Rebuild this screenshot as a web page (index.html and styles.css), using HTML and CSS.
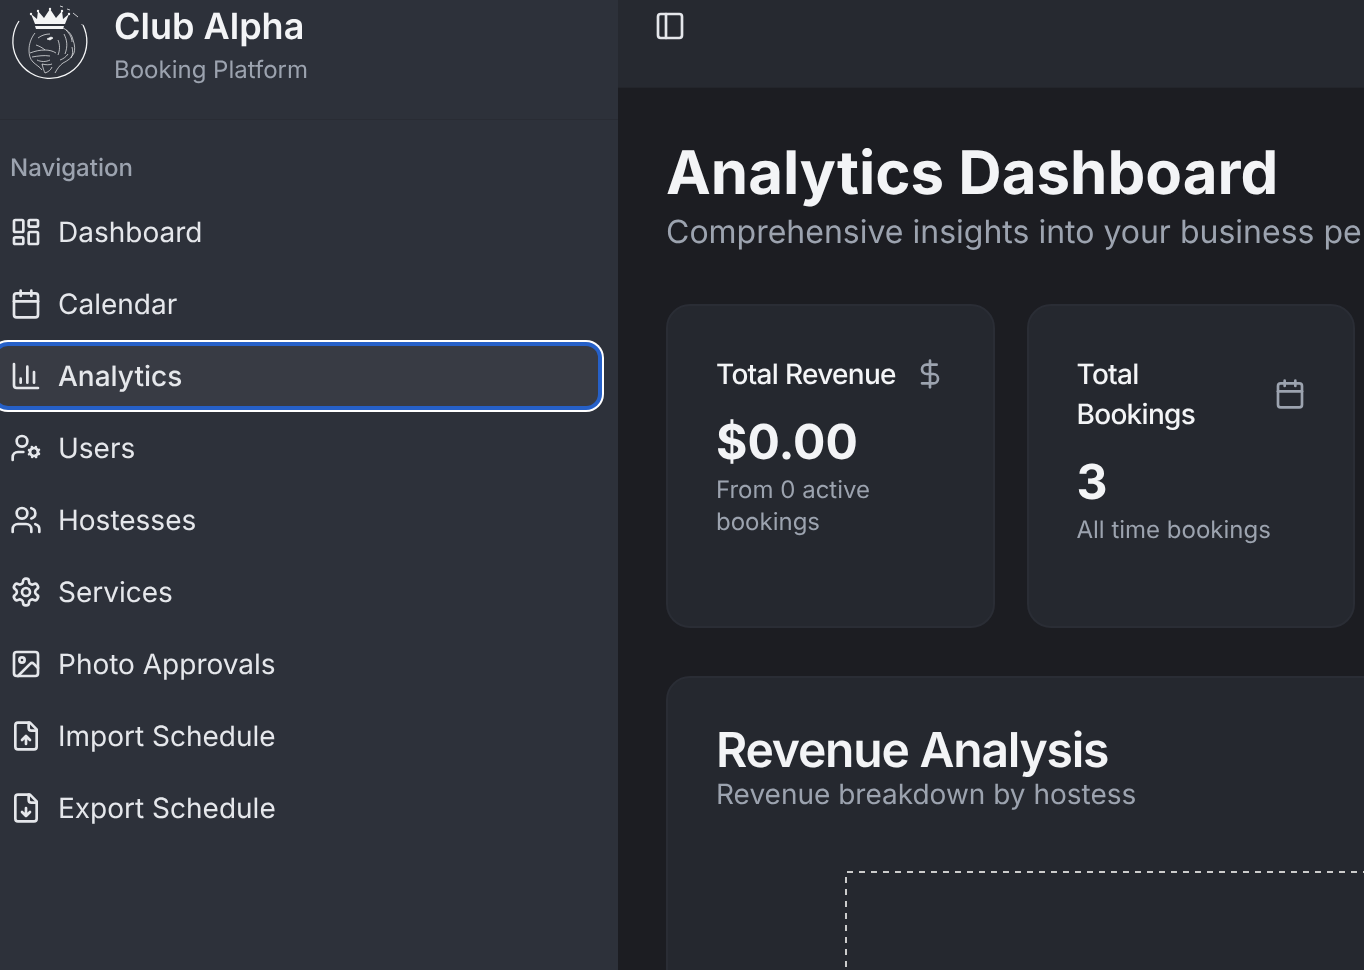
FILE: index.html
```html
<!DOCTYPE html>
<html>
<head>
<meta charset="utf-8">
<title>Club Alpha - Analytics</title>
<link rel="stylesheet" href="styles.css">
</head>
<body>
<div class="app">

<aside class="sidebar">
  <div class="brand">
    <svg class="logo" viewBox="0 0 100 90" fill="none" stroke="#f4f5f6">
      <!-- ring, open at the top where the crown sits -->
      <path d="M19 21A37 37 0 1 0 83 25" stroke-width="1.3"/>
      <path d="M60 6l3 1M67 9l3 1M73 13l5 4M82 24v1" stroke-width=".8"/>
      <!-- crown -->
      <path d="M35 24L31 14l6 5 1-8 6 7 6-9 6 9 6-7 1 8 6-5-4 10z" fill="#f4f5f6" stroke="none"/>
      <path d="M35 26h29l-1 3H36z" fill="#f4f5f6" stroke="none"/>
      <circle cx="31" cy="14" r="1.2" fill="#f4f5f6" stroke="none"/>
      <circle cx="38" cy="11" r="1.2" fill="#f4f5f6" stroke="none"/>
      <circle cx="50" cy="9" r="1.2" fill="#f4f5f6" stroke="none"/>
      <circle cx="62" cy="11" r="1.2" fill="#f4f5f6" stroke="none"/>
      <circle cx="69" cy="14" r="1.2" fill="#f4f5f6" stroke="none"/>
      <!-- lion head -->
      <g stroke-width=".7">
        <path d="M35 33C31 38 29 44 29 50c0 5 1 9 4 12 3 3 7 5 9 8"/>
        <path d="M63 28c6 3 9 7 10 12 2 5 2 10 1 13-2 5-7 8-11 10-3 2-6 6-8 10"/>
        <path d="M66 30c4 4 6 8 6 12M72 47c1 4 1 7-1 11M64 34c3 6 4 12 1 20M58 40c2 5 2 10 0 15M60 60c3-1 6-3 8-6"/>
        <path d="M38 38c4-3 8-4 12-4M36 45c3 1 7 3 9 5M30 53c5-2 10-3 15-3 4 0 8 1 11 3M32 57c6-1 12-2 18-1M37 60c4 2 9 2 13 0"/>
        <path d="M42 64c1 4 2 7 3 9 3-1 6-3 7-6M42 64c4 1 8 1 10 0"/>
        <path d="M47 39l4-2 2 1-3 2z" fill="#f4f5f6"/>
      </g>
    </svg>
    <div class="brand-text">
      <div class="brand-name">Club Alpha</div>
      <div class="brand-sub">Booking Platform</div>
    </div>
  </div>

  <div class="nav-label">Navigation</div>
  <nav class="nav">
    <a class="nav-item">
      <svg class="icon" viewBox="0 0 24 24"><rect x="3" y="3" width="7" height="9" rx="1"/><rect x="14" y="3" width="7" height="5" rx="1"/><rect x="14" y="12" width="7" height="9" rx="1"/><rect x="3" y="16" width="7" height="5" rx="1"/></svg>
      Dashboard
    </a>
    <a class="nav-item">
      <svg class="icon" viewBox="0 0 24 24"><path d="M8 2v4M16 2v4"/><rect x="3" y="4" width="18" height="18" rx="2"/><path d="M3 10h18"/></svg>
      Calendar
    </a>
    <a class="nav-item active">
      <svg class="icon" viewBox="0 0 24 24"><path d="M3 3v16a2 2 0 0 0 2 2h16"/><path d="M8 17v-3M13 17V5M18 17V9"/></svg>
      Analytics
    </a>
    <a class="nav-item">
      <svg class="icon" viewBox="0 0 24 24"><circle cx="18" cy="15" r="3"/><circle cx="9" cy="7" r="4"/><path d="M10 15H6a4 4 0 0 0-4 4v2"/><path d="M21.7 16.4l-.9-.3M15.2 13.9l-.9-.3M16.6 18.7l.3-.9M19.1 12.2l.3-.9M19.6 18.7l-.4-1M16.8 12.3l-.4-1M14.3 16.6l1-.4M20.7 13.8l1-.4"/></svg>
      Users
    </a>
    <a class="nav-item">
      <svg class="icon" viewBox="0 0 24 24"><path d="M16 21v-2a4 4 0 0 0-4-4H6a4 4 0 0 0-4 4v2"/><circle cx="9" cy="7" r="4"/><path d="M22 21v-2a4 4 0 0 0-3-3.87"/><path d="M16 3.13a4 4 0 0 1 0 7.75"/></svg>
      Hostesses
    </a>
    <a class="nav-item">
      <svg class="icon" viewBox="0 0 24 24"><path d="M12.22 2h-.44a2 2 0 0 0-2 2v.18a2 2 0 0 1-1 1.73l-.43.25a2 2 0 0 1-2 0l-.15-.08a2 2 0 0 0-2.73.73l-.22.38a2 2 0 0 0 .73 2.73l.15.1a2 2 0 0 1 1 1.72v.51a2 2 0 0 1-1 1.74l-.15.09a2 2 0 0 0-.73 2.73l.22.38a2 2 0 0 0 2.73.73l.15-.08a2 2 0 0 1 2 0l.43.25a2 2 0 0 1 1 1.73V20a2 2 0 0 0 2 2h.44a2 2 0 0 0 2-2v-.18a2 2 0 0 1 1-1.73l.43-.25a2 2 0 0 1 2 0l.15.08a2 2 0 0 0 2.73-.73l.22-.39a2 2 0 0 0-.73-2.73l-.15-.08a2 2 0 0 1-1-1.74v-.5a2 2 0 0 1 1-1.74l.15-.09a2 2 0 0 0 .73-2.73l-.22-.38a2 2 0 0 0-2.73-.73l-.15.08a2 2 0 0 1-2 0l-.43-.25a2 2 0 0 1-1-1.73V4a2 2 0 0 0-2-2z"/><circle cx="12" cy="12" r="3"/></svg>
      Services
    </a>
    <a class="nav-item">
      <svg class="icon" viewBox="0 0 24 24"><rect x="3" y="3" width="18" height="18" rx="2"/><circle cx="9" cy="9" r="2"/><path d="M21 15l-3.09-3.09a2 2 0 0 0-2.82 0L6 21"/></svg>
      Photo Approvals
    </a>
    <a class="nav-item">
      <svg class="icon" viewBox="0 0 24 24"><path d="M15 2H6a2 2 0 0 0-2 2v16a2 2 0 0 0 2 2h12a2 2 0 0 0 2-2V7z"/><path d="M14 2v4a2 2 0 0 0 2 2h4"/><path d="M12 18v-6M9 15l3-3 3 3"/></svg>
      Import Schedule
    </a>
    <a class="nav-item">
      <svg class="icon" viewBox="0 0 24 24"><path d="M15 2H6a2 2 0 0 0-2 2v16a2 2 0 0 0 2 2h12a2 2 0 0 0 2-2V7z"/><path d="M14 2v4a2 2 0 0 0 2 2h4"/><path d="M12 12v6M9 15l3 3 3-3"/></svg>
      Export Schedule
    </a>
  </nav>
</aside>

<div class="main">
  <header class="topbar">
    <svg class="icon toggle" viewBox="0 0 24 24"><rect x="3" y="3" width="18" height="18" rx="2"/><path d="M9 3v18"/></svg>
  </header>

  <div class="content">
    <h1 class="title">Analytics Dashboard</h1>
    <p class="subtitle">Comprehensive insights into your business performance</p>

    <div class="stats">
      <div class="card">
        <div class="card-head">
          <div class="card-title">Total Revenue</div>
          <svg class="icon muted" viewBox="0 0 24 24"><path d="M12 2v20"/><path d="M17 5H9.5a3.5 3.5 0 0 0 0 7h5a3.5 3.5 0 0 1 0 7H6"/></svg>
        </div>
        <div class="card-value">$0.00</div>
        <div class="card-note">From 0 active bookings</div>
      </div>
      <div class="card">
        <div class="card-head">
          <div class="card-title">Total Bookings</div>
          <svg class="icon muted" viewBox="0 0 24 24"><path d="M8 2v4M16 2v4"/><rect x="3" y="4" width="18" height="18" rx="2"/><path d="M3 10h18"/></svg>
        </div>
        <div class="card-value">3</div>
        <div class="card-note">All time bookings</div>
      </div>
    </div>

    <section class="panel">
      <h2 class="panel-title">Revenue Analysis</h2>
      <p class="panel-sub">Revenue breakdown by hostess</p>
      <svg class="chart" viewBox="0 0 700 300"><path d="M2 300V1H700"/></svg>
    </section>
  </div>
</div>

</div>
</body>
</html>
```

FILE: styles.css
```css
html, body {
  margin: 0;
  padding: 0;
  height: 100%;
  overflow: hidden;
}
body {
  background: #1c1d22;
  color: #f3f4f6;
  font-family: Inter, "Liberation Sans", sans-serif;
  text-rendering: geometricPrecision;
}
.app {
  display: flex;
  height: 970px;
  overflow: hidden;
  will-change: transform; /* own layer, gives the softer grey text edges */
}

/* sidebar */
.sidebar {
  width: 618px;
  flex: none;
  background: #2d313a;
}
.brand {
  display: flex;
  align-items: flex-start;
  gap: 14px;
  height: 119px;
  border-bottom: 1px solid #292c34;
}
.logo {
  width: 100px;
  height: 90px;
  flex: none;
}
.brand-text {
  padding-top: 4px;
}
.brand-name {
  font-size: 36px;
  line-height: 44px;
  font-weight: 600;
}
.brand-sub {
  margin-top: 4px;
  font-size: 24px;
  line-height: 36px;
  color: #9ca3af;
}
.nav-label {
  margin: 32px 0 0 10px;
  font-size: 24px;
  line-height: 32px;
  font-weight: 500;
  color: #9ca3af;
}
.nav {
  display: flex;
  flex-direction: column;
  gap: 12px;
  width: 602px;
  margin: 18px 0 0 -4px;
}
.nav-item {
  display: flex;
  align-items: center;
  gap: 16px;
  height: 60px;
  padding-left: 14px;
  border-radius: 12px;
  font-size: 28px;
  color: #e5e7eb;
}
.nav-item.active {
  background: #383b44;
  font-weight: 500;
  box-shadow: 0 0 0 4px #2660c8, 0 0 0 6px #fff;
}
.icon {
  width: 32px;
  height: 32px;
  flex: none;
  fill: none;
  stroke: #e5e7eb;
  stroke-width: 2;
  stroke-linecap: round;
  stroke-linejoin: round;
}

/* main area */
.main {
  flex: 1;
  min-width: 0;
  overflow: hidden;
}
.topbar {
  height: 87px;
  padding-left: 36px;
  background: #262930;
  border-bottom: 1px solid #23252b;
}
.toggle {
  display: block;
  padding-top: 10px;
}
.content {
  width: 1000px;
  padding: 49px 0 0 48px;
}
.title {
  margin: 0;
  font-size: 60px;
  line-height: 72px;
  font-weight: 700;
  white-space: nowrap;
}
.subtitle {
  margin: 3px 0 0;
  font-size: 32px;
  line-height: 40px;
  color: #9ca3af;
  white-space: nowrap;
}
.stats {
  display: grid;
  grid-template-columns: 328.5px 328px;
  gap: 32px;
  margin-top: 52px;
}
.card {
  height: 324px;
  box-sizing: border-box;
  padding: 48px;
  background: #25282f;
  border: 2px solid #2a2d35;
  border-radius: 24px;
}
.card-head {
  display: flex;
  align-items: center;
  justify-content: space-between;
  gap: 16px;
  margin-right: -1px;
}
.card-title {
  font-size: 28px;
  line-height: 40px;
  font-weight: 500;
  letter-spacing: -0.7px;
}
.card-head .muted {
  stroke: #9ca3af;
}
.card-value {
  margin-top: 20px;
  font-size: 48px;
  line-height: 56px;
  font-weight: 700;
}
.card-note {
  margin-top: 4px;
  font-size: 24px;
  line-height: 32px;
  color: #9ca3af;
}
.panel {
  width: 900px;
  height: 400px;
  box-sizing: border-box;
  margin-top: 48px;
  padding: 48px;
  background: #25282f;
  border: 2px solid #2a2d35;
  border-radius: 24px;
}
.panel-title {
  margin: 0;
  font-size: 48px;
  line-height: 48px;
  font-weight: 600;
  letter-spacing: -1.2px;
}
.panel-sub {
  margin: 0;
  font-size: 28px;
  line-height: 40px;
  color: #9ca3af;
}
.chart {
  display: block;
  width: 700px;
  height: 300px;
  margin: 57px 0 0 128px;
  fill: none;
  stroke: #ccc;
  stroke-width: 2;
  stroke-dasharray: 6 6;
}
```
